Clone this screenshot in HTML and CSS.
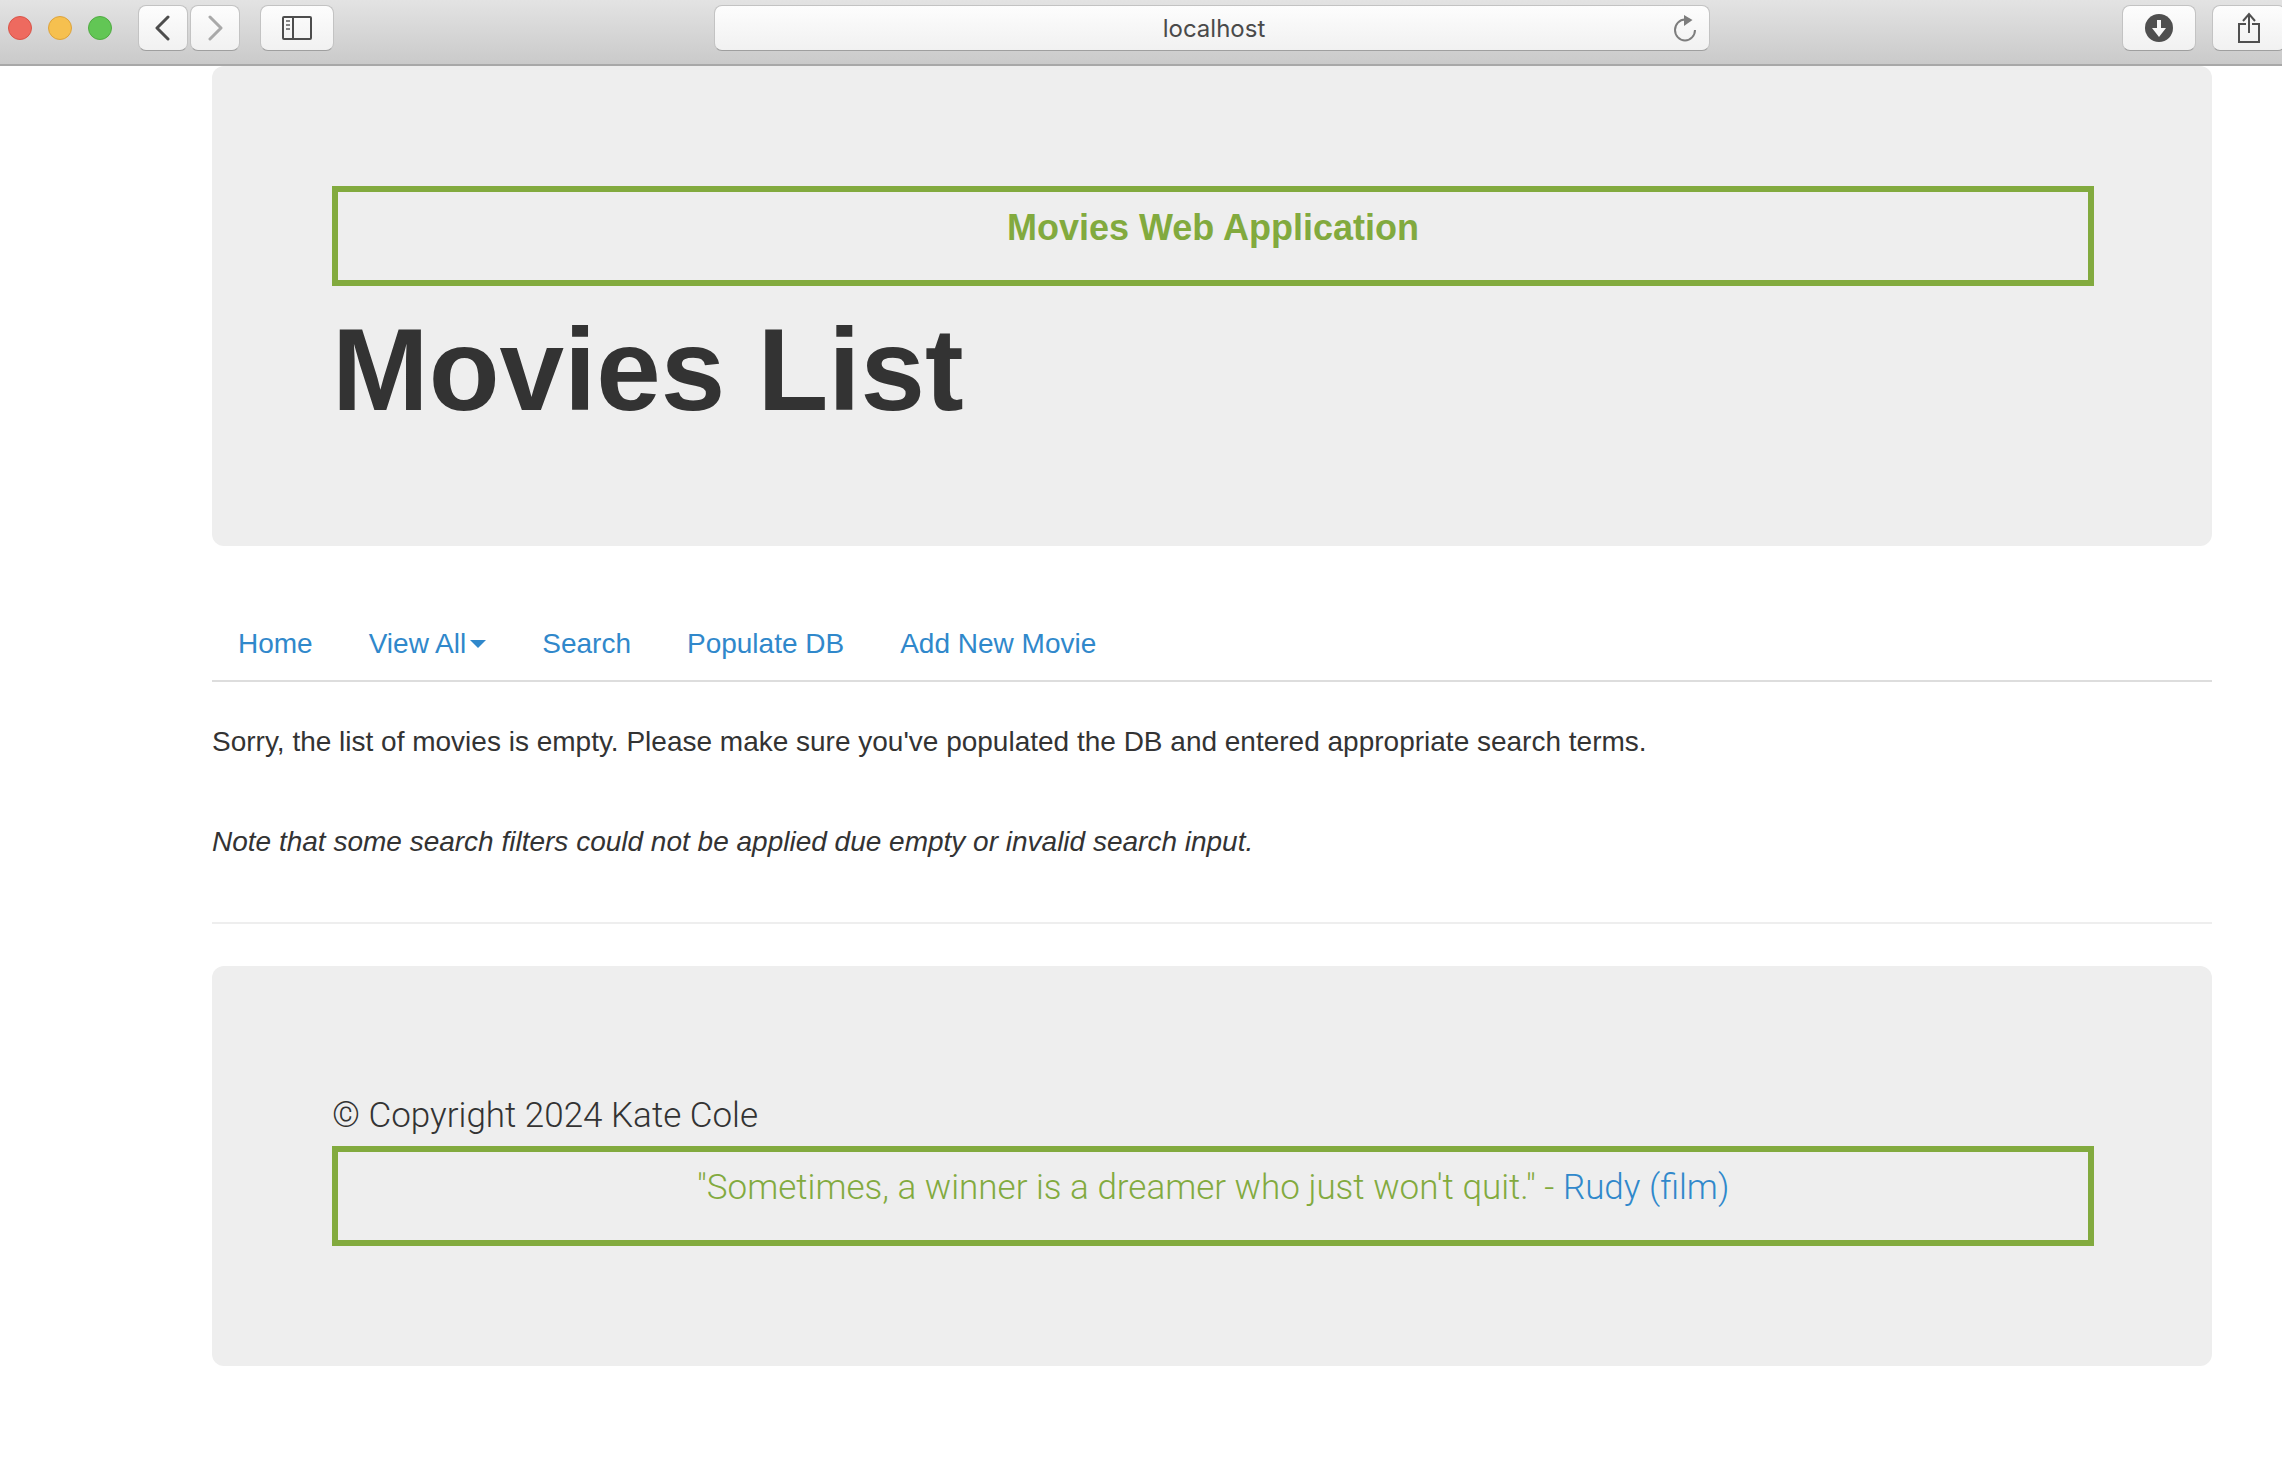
FILE: index.html
```html
<!DOCTYPE html>
<html lang="en">
<head>
<meta charset="utf-8">
<title>Movies List</title>
<link rel="stylesheet" href="styles.css">
</head>
<body>
<header class="toolbar">
  <div class="lights">
    <span class="light red"></span>
    <span class="light yellow"></span>
    <span class="light green"></span>
  </div>
  <div class="history">
    <button class="tool small" type="button" aria-label="Back">
      <svg width="16" height="26" viewBox="0 0 16 26" fill="none" stroke="#4d4d4d" stroke-width="3" stroke-linecap="round" stroke-linejoin="round"><path d="M13 2 2 13l11 11"/></svg>
    </button>
    <button class="tool small" type="button" aria-label="Forward">
      <svg width="16" height="26" viewBox="0 0 16 26" fill="none" stroke="#a9a9a9" stroke-width="3" stroke-linecap="round" stroke-linejoin="round"><path d="m3 2 11 11L3 24"/></svg>
    </button>
  </div>
  <button class="tool" type="button" aria-label="Sidebar">
    <svg width="30" height="24" viewBox="0 0 30 24" fill="none" stroke="#4d4d4d" stroke-width="2"><rect x="1" y="1" width="28" height="22" rx="1"/><path d="M11 1v22"/><path stroke="#858585" d="M4 5h4M4 9h4M4 13h4"/></svg>
  </button>
  <div class="address">
    <input class="url" type="text" value="localhost" aria-label="Address">
    <button class="reload" type="button" aria-label="Reload">
      <svg width="24" height="28" viewBox="0 0 24 28"><path d="M12 5.500A10 10.500 0 1 0 22 16" fill="none" stroke="#7d7d7d" stroke-width="2"/><path d="M11 1l8.500 5L11 12z" fill="#7d7d7d"/></svg>
    </button>
  </div>
  <div class="actions">
    <button class="tool" type="button" aria-label="Downloads">
      <svg width="28" height="28" viewBox="0 0 28 28"><circle cx="14" cy="14" r="14" fill="#4f4f4f"/><path d="M12 6h4v8h5l-7 9-7-9h5z" fill="#f8f8f8"/></svg>
    </button>
    <button class="tool" type="button" aria-label="Share">
      <svg width="24" height="32" viewBox="0 0 24 32" fill="none" stroke="#505050" stroke-width="2"><path d="M9 12H2v18h20V12h-7M12 21V3M6 9l6-7 6 7"/></svg>
    </button>
  </div>
</header>
<div class="container">
  <section class="hero">
    <div class="banner strong">Movies Web Application</div>
    <h1 class="title">Movies List</h1>
  </section>
  <nav class="tabs">
    <a class="tab" href="#">Home</a>
    <a class="tab" href="#">View All<span class="caret"></span></a>
    <a class="tab" href="#">Search</a>
    <a class="tab" href="#">Populate DB</a>
    <a class="tab" href="#">Add New Movie</a>
  </nav>
  <main>
    <p class="message">Sorry, the list of movies is empty. Please make sure you've populated the DB and entered appropriate search terms.</p>
    <p class="message note">Note that some search filters could not be applied due empty or invalid search input.</p>
  </main>
  <hr class="rule">
  <footer class="hero light-text">
    <div>© Copyright 2024 Kate Cole</div>
    <div class="banner">"Sometimes, a winner is a dreamer who just won't quit." - <a href="#">Rudy (film)</a></div>
  </footer>
</div>
</body>
</html>
```
FILE: styles.css
```css
* { box-sizing: border-box; }

body {
  margin: 0;
  background: #fff;
  color: #333;
  font: 28px/40px "Liberation Sans", Arial, sans-serif;
}

a { color: #3088cb; text-decoration: none; }

/* Browser toolbar */
.toolbar {
  display: flex;
  align-items: flex-start;
  padding: 5px 0 13px 8px;
  height: 66px;
  background: linear-gradient(#e3e3e3, #cacaca);
  border-bottom: 2px solid #a8a8a8;
  overflow: hidden;
}

.lights { display: flex; gap: 16px; margin: 11px 26px 0 0; }

.light { width: 24px; height: 24px; border: 1px solid; border-radius: 50%; }
.red { background: #ee6a5f; border-color: #d95448; }
.yellow { background: #f6c04f; border-color: #dda33c; }
.green { background: #62c655; border-color: #50ab42; }

.history { display: flex; gap: 2px; margin-right: 20px; }

.tool, .address {
  display: flex;
  align-items: center;
  justify-content: center;
  height: 46px;
  background: linear-gradient(#fdfdfd, #f1f1f1);
  border: 1px solid #c3c3c3;
  border-bottom-color: #9f9f9f;
  border-radius: 8px;
}

.tool { flex: none; width: 74px; padding: 0; }
.small { width: 50px; }

.address {
  flex: 1;
  min-width: 0;
  margin: 0 412px 0 380px;
  padding: 0 12px 0 40px;
}

.url {
  flex: 1;
  min-width: 0;
  padding: 2px 0 0;
  border: 0;
  background: none;
  color: #4a4a4a;
  font: 24px/40px Inter, sans-serif;
  text-align: center;
}

.reload { display: flex; padding: 0; border: 0; background: none; }

.actions { display: flex; gap: 16px; margin-right: -4px; }

/* Page */
.container { margin: 0 70px 40px 212px; }

.hero {
  padding: 120px 118px 120px 120px;
  background: #eee;
  border-radius: 12px;
  font-size: 36px;
  line-height: 60px;
}

.banner {
  padding: 6px 0 22px;
  border: 6px solid #82aa3e;
  color: #82aa3e;
  text-align: center;
}

.strong { font-weight: 700; }

.light-text { font-family: Roboto, sans-serif; font-size: 35px; font-weight: 300; }

.title { margin: 28px 0 0; font-size: 116px; line-height: 112px; }

.tabs {
  display: flex;
  gap: 4px;
  margin-top: 60px;
  border-bottom: 2px solid #ddd;
}

.tab { display: flex; align-items: center; padding: 18px 26px 16px; }

.caret {
  margin-left: 4px;
  border: 8px solid transparent;
  border-top-color: currentColor;
  border-bottom: 0;
}

.message { margin: 40px 0 60px; }
.note { font-style: italic; }

.rule { margin: 0 0 42px; border: 0; border-top: 2px solid #eee; }
```
